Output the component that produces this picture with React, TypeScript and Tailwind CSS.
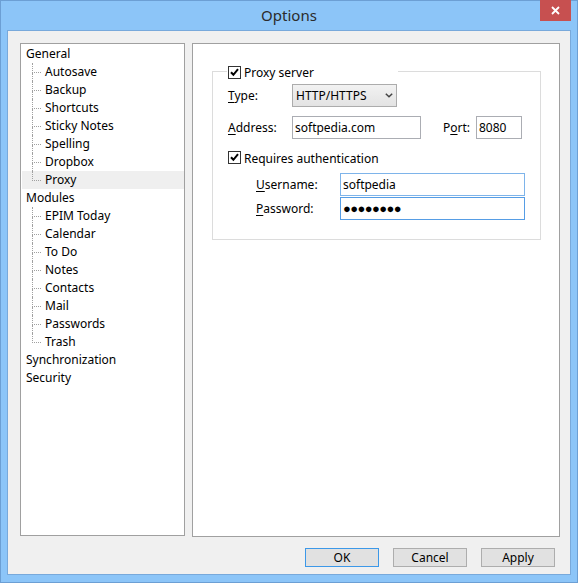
import React from 'react';

const GENERAL = ['Autosave', 'Backup', 'Shortcuts', 'Sticky Notes', 'Spelling', 'Dropbox', 'Proxy'];
const MODULES = ['EPIM Today', 'Calendar', 'To Do', 'Notes', 'Contacts', 'Mail', 'Passwords', 'Trash'];

function cx(...c: (string | false | undefined)[]) {
  return c.filter(Boolean).join(' ');
}

const CheckBox = () => (
  <span className="flex h-[13px] w-[13px] shrink-0 items-center justify-center border border-[#333333] bg-white">
    <svg width="9" height="9" viewBox="0 0 9 9">
      <path d="M1 4.2 L3.4 6.8 L8 1.2" stroke="#000" strokeWidth="2" fill="none" />
    </svg>
  </span>
);

const TreeChild = ({ label, last, selected }: { label: string; last?: boolean; selected?: boolean }) => (
  <div className={cx('ml-[1px] flex h-[18px] items-stretch pl-[10px]', selected && 'bg-[#efefef]')}>
    <div className="flex w-[9px] flex-col">
      <div className="h-[10px] border-b border-l border-dotted border-[#a0a0a0]" />
      {!last && <div className="flex-1 border-l border-dotted border-[#a0a0a0]" />}
    </div>
    <span className="ml-[4px] leading-[18px]">{label}</span>
  </div>
);

const TreeRoot = ({ label }: { label: string }) => (
  <div className="h-[18px] pl-[5px] leading-[18px]">{label}</div>
);

const Underlined = ({ first, rest }: { first: string; rest: string }) => (
  <span>
    <span className="underline underline-offset-2">{first}</span>
    {rest}
  </span>
);

const WinButton = ({ label, primary }: { label: string; primary?: boolean }) => (
  <button
    className={cx(
      'h-[19px] w-[74px] border bg-[#e1e1e1] text-center leading-[17px] text-black',
      primary ? 'border-[#3c98e8]' : 'border-[#adadad]'
    )}
  >
    {label}
  </button>
);

export default function App() {
  return (
    <div className="flex h-[583px] w-[578px] flex-col border border-[#6c9fd4] bg-[#8cc5f8] font-['Noto_Sans',sans-serif] text-[12px] text-black">
      {/* title bar */}
      <div className="relative flex h-[29px] shrink-0 items-center justify-center">
        <span className="pb-[1px] text-[15px] text-[#2b2b2b]">Options</span>
        <div className="absolute right-[6px] top-[-1px] flex h-[21px] w-[31px] items-center justify-center bg-[#c75050]">
          <svg width="9" height="9" viewBox="0 0 9 9">
            <path d="M1 1 L8 8 M8 1 L1 8" stroke="#fff" strokeWidth="1.8" />
          </svg>
        </div>
      </div>

      {/* client area */}
      <div className="mx-[6px] mb-[7px] flex flex-1 flex-col border border-[#78a9db] bg-[#f0f0f0] pb-[7px] pl-[12px] pr-[10px] pt-[12px]">
        <div className="flex h-[493px] gap-[7px]">
          {/* tree */}
          <div className="w-[165px] shrink-0 border border-[#a0a0a0] bg-white pt-[1px]">
            <TreeRoot label="General" />
            {GENERAL.map((g, i) => (
              <TreeChild key={g} label={g} last={i === GENERAL.length - 1} selected={g === 'Proxy'} />
            ))}
            <TreeRoot label="Modules" />
            {MODULES.map((m, i) => (
              <TreeChild key={m} label={m} last={i === MODULES.length - 1} />
            ))}
            <TreeRoot label="Synchronization" />
            <TreeRoot label="Security" />
          </div>

          {/* proxy page */}
          <div className="h-[494px] w-[368px] shrink-0 border border-[#a0a0a0] bg-white pl-[19px] pt-[27px]">
            <div className="relative h-[169px] w-[329px] border border-[#dcdcdc] pl-[15px] pt-[12px]">
              <div className="absolute left-[14px] top-[-7px] flex h-[14px] w-[171px] items-center gap-[3px] bg-white pl-[1px]">
                <CheckBox />
                <span className="pt-[1px] leading-[14px]">Proxy server</span>
              </div>

              <div className="flex h-[23px] items-center">
                <span className="w-[64px]">
                  <Underlined first="T" rest="ype:" />
                </span>
                <div className="flex h-[23px] w-[105px] items-center justify-between border border-[#acacac] bg-gradient-to-b from-[#f2f2f2] to-[#e3e3e3] pl-[3px] pr-[3px]">
                  <span>HTTP/HTTPS</span>
                  <svg width="8" height="5" viewBox="0 0 8 5">
                    <path d="M0.8 0.8 L4 3.8 L7.2 0.8" stroke="#444" strokeWidth="1.5" fill="none" />
                  </svg>
                </div>
              </div>

              <div className="mt-[9px] flex h-[23px] items-center">
                <span className="w-[64px]">
                  <Underlined first="A" rest="ddress:" />
                </span>
                <div className="flex h-[23px] w-[129px] items-center border border-[#abadb3] bg-white pl-[2px]">
                  softpedia.com
                </div>
                <span className="ml-[22px] w-[33px]">
                  P<span className="underline underline-offset-2">o</span>rt:
                </span>
                <div className="flex h-[23px] w-[46px] items-center border border-[#abadb3] bg-white pl-[2px]">
                  8080
                </div>
              </div>

              <div className="mt-[12px] flex h-[13px] items-center gap-[3px]">
                <CheckBox />
                <span className="pt-[1px] leading-[13px]">Requires authentication</span>
              </div>

              <div className="mt-[9px] flex h-[23px] items-center pl-[28px]">
                <span className="w-[84px]">
                  <Underlined first="U" rest="sername:" />
                </span>
                <div className="flex h-[23px] w-[185px] items-center border border-[#7eb4ea] bg-white pl-[2px]">
                  softpedia
                </div>
              </div>

              <div className="mt-[1px] flex h-[23px] items-center pl-[28px]">
                <span className="w-[84px]">
                  <Underlined first="P" rest="assword:" />
                </span>
                <div className="flex h-[23px] w-[185px] items-center border border-[#569de5] bg-white pl-[2px] text-[13px] tracking-[-0.6px]">
                  ●●●●●●●●
                </div>
              </div>
            </div>
          </div>
        </div>

        {/* buttons */}
        <div className="mt-[12px] flex justify-end gap-[14px] pr-[5px]">
          <WinButton label="OK" primary />
          <WinButton label="Cancel" />
          <WinButton label="Apply" />
        </div>
      </div>
    </div>
  );
}
